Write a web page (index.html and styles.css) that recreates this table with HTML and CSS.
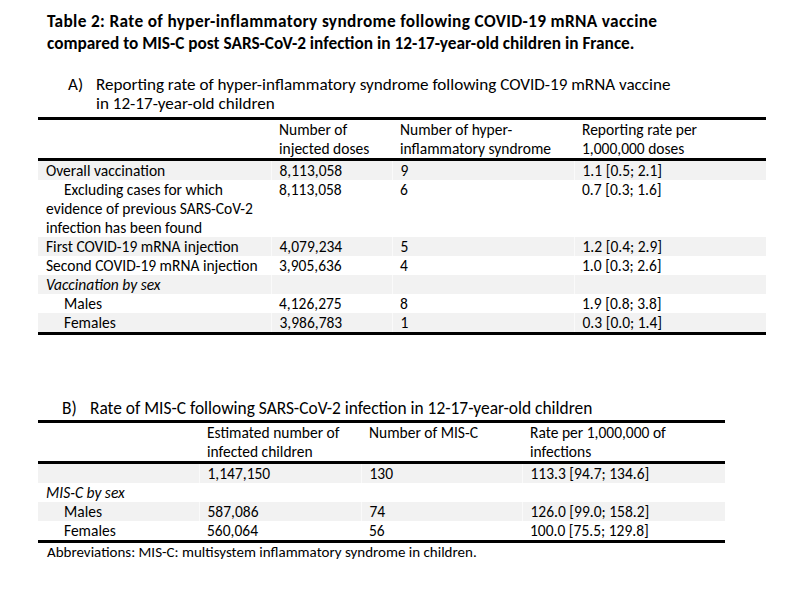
FILE: index.html
```html
<!DOCTYPE html>
<html>
<head>
<meta charset="utf-8">
<link rel="stylesheet" href="styles.css">
</head>
<body>
<div class="page">
  <h1 class="title"><span class="title-l1">Table 2: Rate of hyper-inflammatory syndrome following COVID-19 mRNA vaccine</span><br>compared to MIS-C post SARS-CoV-2 infection in 12-17-year-old children in France.</h1>

  <div class="sub sub-a">
    <span class="marker">A)</span>
    <span class="sub-text">Reporting rate of hyper-inflammatory syndrome following COVID-19 mRNA vaccine<br>in 12-17-year-old children</span>
  </div>
  <table class="tbl tbl-a">
    <colgroup>
      <col class="a1"><col class="a2"><col class="a3"><col class="a4">
    </colgroup>
    <thead>
      <tr><th></th><th>Number of<br>injected doses</th><th>Number of hyper-<br>inflammatory syndrome</th><th>Reporting rate per<br>1,000,000 doses</th></tr>
    </thead>
    <tbody>
      <tr class="grey"><td>Overall vaccination</td><td>8,113,058</td><td>9</td><td>1.1 [0.5; 2.1]</td></tr>
      <tr><td><span class="indent">Excluding cases for which</span><br>evidence of previous SARS-CoV-2<br>infection has been found</td><td>8,113,058</td><td>6</td><td>0.7 [0.3; 1.6]</td></tr>
      <tr class="grey"><td>First COVID-19 mRNA injection</td><td>4,079,234</td><td>5</td><td>1.2 [0.4; 2.9]</td></tr>
      <tr><td>Second COVID-19 mRNA injection</td><td>3,905,636</td><td>4</td><td>1.0 [0.3; 2.6]</td></tr>
      <tr class="grey"><td class="it">Vaccination by sex</td><td></td><td></td><td></td></tr>
      <tr><td><span class="indent">Males</span></td><td>4,126,275</td><td>8</td><td>1.9 [0.8; 3.8]</td></tr>
      <tr class="grey"><td><span class="indent">Females</span></td><td>3,986,783</td><td>1</td><td>0.3 [0.0; 1.4]</td></tr>
    </tbody>
  </table>

  <div class="sub sub-b">
    <span class="marker">B)</span>
    <span class="sub-text">Rate of MIS-C following SARS-CoV-2 infection in 12-17-year-old children</span>
  </div>
  <table class="tbl tbl-b">
    <colgroup>
      <col class="b1"><col class="b2"><col class="b3"><col class="b4">
    </colgroup>
    <thead>
      <tr><th></th><th>Estimated number of<br>infected children</th><th>Number of MIS-C</th><th>Rate per 1,000,000 of<br>infections</th></tr>
    </thead>
    <tbody>
      <tr class="grey"><td></td><td>1,147,150</td><td>130</td><td>113.3 [94.7; 134.6]</td></tr>
      <tr><td class="it">MIS-C by sex</td><td></td><td></td><td></td></tr>
      <tr class="grey"><td><span class="indent">Males</span></td><td>587,086</td><td>74</td><td>126.0 [99.0; 158.2]</td></tr>
      <tr><td><span class="indent">Females</span></td><td>560,064</td><td>56</td><td>100.0 [75.5; 129.8]</td></tr>
    </tbody>
  </table>
  <p class="note">Abbreviations: MIS-C: multisystem inflammatory syndrome in children.</p>
</div>
</body>
</html>
```

FILE: styles.css
```css
html, body {
  margin: 0;
  padding: 0;
  background: #fff;
}
body {
  font-family: Carlito, Calibri, Lato, "Liberation Sans", sans-serif;
  font-size: 15.5px;
  line-height: 19px;
  color: #000;
}
.page {
  padding: 11px 0 0 38px;
  width: 728px;
}
.title {
  margin: 0 0 0 9px;
  font-size: 17.3px;
  line-height: 22px;
  font-weight: bold;
}
.title-l1 {
  letter-spacing: 0.35px;
}
.sub {
  display: flex;
}
.sub-a {
  margin: 20px 0 4px 30px;
  font-size: 17.1px;
}
.sub-b {
  margin: 64px 0 2px 24px;
  font-size: 17.4px;
}
.marker {
  width: 28px;
  flex: none;
}
.tbl {
  border-collapse: collapse;
  border-top: 3px solid #000;
  border-bottom: 3px solid #000;
  table-layout: fixed;
}
.tbl thead tr {
  border-bottom: 3px solid #000;
}
.tbl th, .tbl td {
  padding: 0 0 0 8px;
  text-align: left;
  font-weight: normal;
  vertical-align: top;
  white-space: nowrap;
}
.tbl-a { width: 728px; }
.tbl-b { width: 687px; }
.a1 { width: 233px; }
.a2 { width: 121px; }
.a3 { width: 182px; }
.a4 { width: 192px; }
.b1 { width: 161px; }
.b2 { width: 162px; }
.b3 { width: 161px; }
.b4 { width: 203px; }
.grey td {
  background: #f2f2f2;
}
.grey td + td {
  border-left: 1px solid #fafafa;
}
.indent {
  padding-left: 18px;
}
.it {
  font-style: italic;
}
.note {
  margin: 0 0 0 9px;
  font-size: 15px;
}
```
